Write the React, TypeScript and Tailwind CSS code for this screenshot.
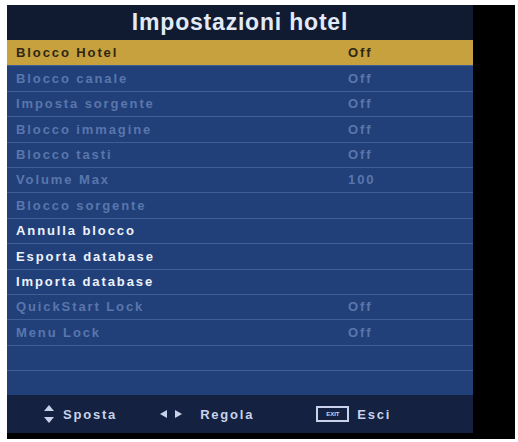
import React from 'react'

interface Row {
  label: string
  value?: string
  state: 'active' | 'enabled' | 'disabled' | 'empty'
}

const rows: Row[] = [
  { label: 'Blocco Hotel', value: 'Off', state: 'active' },
  { label: 'Blocco canale', value: 'Off', state: 'disabled' },
  { label: 'Imposta sorgente', value: 'Off', state: 'disabled' },
  { label: 'Blocco immagine', value: 'Off', state: 'disabled' },
  { label: 'Blocco tasti', value: 'Off', state: 'disabled' },
  { label: 'Volume Max', value: '100', state: 'disabled' },
  { label: 'Blocco sorgente', state: 'disabled' },
  { label: 'Annulla blocco', state: 'enabled' },
  { label: 'Esporta database', state: 'enabled' },
  { label: 'Importa database', state: 'enabled' },
  { label: 'QuickStart Lock', value: 'Off', state: 'disabled' },
  { label: 'Menu Lock', value: 'Off', state: 'disabled' },
  { label: '', state: 'empty' },
  { label: '', state: 'empty' },
]

const rowStyle = (state: Row['state']) => {
  switch (state) {
    case 'active':
      return 'bg-[#c6a13e] text-[#2e2712]'
    case 'enabled':
      return 'bg-[#21407a] text-[#eef2fb] border-t border-[#3f5e96]'
    case 'disabled':
      return 'bg-[#21407a] text-[#5a76ac] border-t border-[#3f5e96]'
    default:
      return 'bg-[#21407a] border-t border-[#3f5e96]'
  }
}

const MenuRow: React.FC<{ row: Row }> = ({ row }) => (
  <div className={`flex h-[25.4px] items-center pl-[9px] text-[13px] font-bold tracking-[1.9px] ${rowStyle(row.state)}`}>
    <span className="w-[332px]">{row.label}</span>
    <span>{row.value}</span>
  </div>
)

const UpDown = () => (
  <svg width="12" height="20" viewBox="0 0 12 20" className="text-[#c9d2ea]">
    <path d="M6 1 L11 7 H1 Z" fill="currentColor" />
    <path d="M6 19 L11 13 H1 Z" fill="currentColor" />
  </svg>
)

const LeftRight = () => (
  <svg width="24" height="10" viewBox="0 0 24 10" className="text-[#c9d2ea]">
    <path d="M1 5 L8 1 V9 Z" fill="currentColor" />
    <path d="M23 5 L16 1 V9 Z" fill="currentColor" />
  </svg>
)

export default function App() {
  return (
    <div className="h-[442px] w-[518px] bg-white pl-[7px] pr-[3px] pt-[5px] pb-[3px]" style={{ fontFamily: '"Liberation Sans", Arial, sans-serif' }}>
      <div className="flex h-full bg-black">
        <div className="flex w-[466px] flex-col">
          <div className="flex h-[35px] items-center justify-center bg-[#101a30] text-[23px] font-bold tracking-[0.8px] text-[#e2eaf8]">
            Impostazioni hotel
          </div>
          {rows.map((row, i) => (
            <MenuRow key={i} row={row} />
          ))}
          <div className="flex h-[38px] items-center bg-[#142140] pl-[36px] text-[13px] font-bold tracking-[1.8px] text-[#c9d2ea]">
            <UpDown />
            <span className="ml-[8px]">Sposta</span>
            <span className="ml-[42px] flex items-center">
              <LeftRight />
            </span>
            <span className="ml-[17px]">Regola</span>
            <span className="ml-[62px] flex h-[16px] w-[33px] items-center justify-center border-2 border-[#c9d2ea] text-[6px] tracking-normal">
              EXIT
            </span>
            <span className="ml-[8px]">Esci</span>
          </div>
          <div className="flex-1 bg-black" />
        </div>
        <div className="flex-1 bg-black" />
      </div>
    </div>
  )
}
